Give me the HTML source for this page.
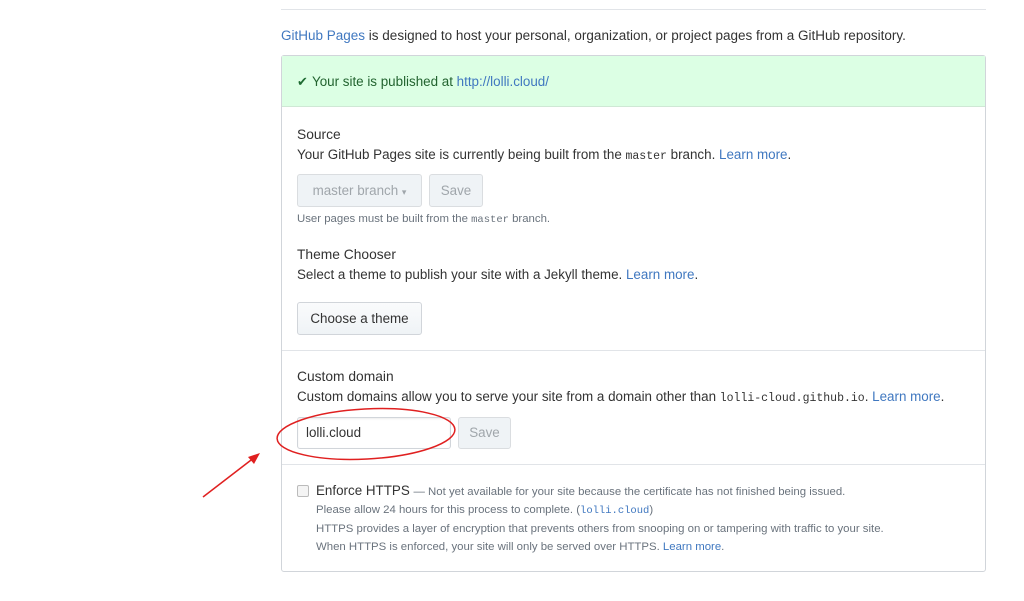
<!DOCTYPE html>
<html><head><meta charset="utf-8"><style>
*{margin:0;padding:0;box-sizing:border-box}
body{width:1024px;height:601px;background:#fff;font-family:"Liberation Sans",sans-serif;color:#333;position:relative;overflow:hidden;font-size:13.4px}
.a{position:absolute;white-space:nowrap}
a,.l{color:#4078c0;text-decoration:none}
.m{font-family:"Liberation Mono",monospace;font-size:11.5px}
.btn{position:absolute;border:1px solid #d1d5da;border-radius:3px;background:linear-gradient(#fafbfc,#eff3f6);font-size:13.4px;text-align:center;color:#333}
.dis{background:#eff3f6;color:#a0a6ab;border-color:#dadde0}
.small{font-size:11.4px;color:#6a737d}
</style></head><body>
<div class="a" style="left:281px;top:9px;width:705px;height:1px;background:#e1e4e8"></div>
<div class="a" style="left:281px;top:28px;font-size:13.5px"><span class="l">GitHub Pages</span> is designed to host your personal, organization, or project pages from a GitHub repository.</div>
<div class="a" style="left:281px;top:55px;width:705px;height:517px;border:1px solid #d1d5da;border-radius:3px"></div>
<div class="a" style="left:282px;top:56px;width:703px;height:51px;background:#dcffe4;border-bottom:1px solid #cfe8d5"></div>
<div class="a" style="left:297px;top:74px;color:#1e6b32;font-size:13px">✔</div>
<div class="a" style="left:312px;top:74px;color:#22632f">Your site is published at <span class="l">http://lolli.cloud/</span></div>

<div class="a" style="left:297px;top:127px;font-size:13.8px">Source</div>
<div class="a" style="left:297px;top:147px">Your GitHub Pages site is currently being built from the <span class="m">master</span> branch. <span class="l">Learn more</span>.</div>
<div class="btn dis" style="left:297px;top:174px;width:125px;height:33px;line-height:31px">master branch <span style="font-size:9px">▾</span></div>
<div class="btn dis" style="left:429px;top:174px;width:54px;height:33px;line-height:31px">Save</div>
<div class="a small" style="left:297px;top:213px">User pages must be built from the <span class="m" style="font-size:10.5px">master</span> branch.</div>

<div class="a" style="left:297px;top:247px;font-size:13.8px">Theme Chooser</div>
<div class="a" style="left:297px;top:267px">Select a theme to publish your site with a Jekyll theme. <span class="l">Learn more</span>.</div>
<div class="btn" style="left:297px;top:302px;width:125px;height:33px;line-height:31px">Choose a theme</div>
<div class="a" style="left:282px;top:350px;width:703px;height:1px;background:#e1e4e8"></div>

<div class="a" style="left:297px;top:369px;font-size:13.8px">Custom domain</div>
<div class="a" style="left:297px;top:389px">Custom domains allow you to serve your site from a domain other than <span class="m">lolli-cloud.github.io</span>. <span class="l">Learn more</span>.</div>
<div class="a" style="left:297px;top:417px;width:154px;height:32px;border:1px solid #d1d5da;border-radius:3px;box-shadow:inset 0 1px 2px rgba(0,0,0,.075);padding:7px 8px;font-size:13.4px">lolli.cloud</div>
<div class="btn dis" style="left:458px;top:417px;width:53px;height:32px;line-height:30px">Save</div>
<div class="a" style="left:282px;top:464px;width:703px;height:1px;background:#e1e4e8"></div>

<div class="a" style="left:297px;top:485px;width:12px;height:12px;border:1px solid #bbb;border-radius:2px;background:#f4f4f4"></div>
<div class="a" style="left:316px;top:483px"><span style="font-size:13.4px;color:#333">Enforce HTTPS</span> <span class="small">— Not yet available for your site because the certificate has not finished being issued.</span></div>
<div class="a small" style="left:316px;top:504px">Please allow 24 hours for this process to complete. (<span class="m l" style="font-size:10.5px">lolli.cloud</span>)</div>
<div class="a small" style="left:316px;top:523px">HTTPS provides a layer of encryption that prevents others from snooping on or tampering with traffic to your site.</div>
<div class="a small" style="left:316px;top:541px">When HTTPS is enforced, your site will only be served over HTTPS. <span class="l">Learn more</span>.</div>

<svg class="a" style="left:0;top:0" width="1024" height="601">
<ellipse cx="366" cy="434" rx="89" ry="25" transform="rotate(-3 366 434)" fill="none" stroke="#e02020" stroke-width="1.5"/>
<line x1="203" y1="497" x2="255" y2="457" stroke="#e02020" stroke-width="1.5"/>
<polygon points="260,453 248,457 254,464" fill="#e02020"/>
</svg>
</body></html>
